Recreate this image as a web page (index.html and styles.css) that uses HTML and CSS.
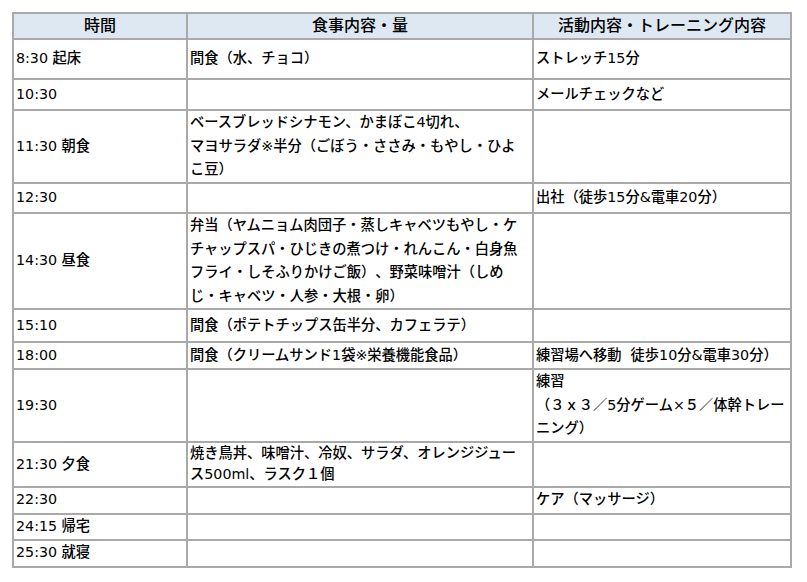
FILE: index.html
```html
<!DOCTYPE html>
<html lang="ja">
<head>
<meta charset="utf-8">
<title>スケジュール</title>
<link rel="stylesheet" href="styles.css">
</head>
<body>
<table class="schedule">
  <colgroup>
    <col class="c-time">
    <col class="c-meal">
    <col class="c-act">
  </colgroup>
  <thead>
    <tr class="h26"><th>時間</th><th>食事内容・量</th><th>活動内容・トレーニング内容</th></tr>
  </thead>
  <tbody>
    <tr class="h40"><td>8:30 起床</td><td>間食（水、チョコ）</td><td>ストレッチ15分</td></tr>
    <tr class="h31"><td>10:30</td><td></td><td>メールチェックなど</td></tr>
    <tr class="h73"><td>11:30 朝食</td><td>ベースブレッドシナモン、かまぼこ4切れ、<br>マヨサラダ※半分（ごぼう・ささみ・もやし・ひよ<br>こ豆）</td><td></td></tr>
    <tr class="h30"><td>12:30</td><td></td><td>出社（徒歩15分&amp;電車20分）</td></tr>
    <tr class="h96"><td>14:30 昼食</td><td>弁当（ヤムニョム肉団子・蒸しキャベツもやし・ケ<br>チャップスパ・ひじきの煮つけ・れんこん・白身魚<br>フライ・しそふりかけご飯）、野菜味噌汁（しめ<br>じ・キャベツ・人参・大根・卵）</td><td></td></tr>
    <tr class="h33"><td>15:10</td><td>間食（ポテトチップス缶半分、カフェラテ）</td><td></td></tr>
    <tr class="h27"><td>18:00</td><td>間食（クリームサンド1袋※栄養機能食品）</td><td>練習場へ移動&nbsp; 徒歩10分&amp;電車30分）</td></tr>
    <tr class="h72"><td>19:30</td><td></td><td>練習<br>（３ｘ３／5分ゲーム×５／体幹トレー<br>ニング）</td></tr>
    <tr class="h45 tight"><td>21:30 夕食</td><td>焼き鳥丼、味噌汁、冷奴、サラダ、オレンジジュー<br>ス500ml、ラスク１個</td><td></td></tr>
    <tr class="h27"><td>22:30</td><td></td><td>ケア（マッサージ）</td></tr>
    <tr class="h26"><td>24:15 帰宅</td><td></td><td></td></tr>
    <tr class="h27"><td>25:30 就寝</td><td></td><td></td></tr>
  </tbody>
</table>
</body>
</html>
```
FILE: styles.css
```css
html, body {
  margin: 0;
  padding: 0;
  background: #ffffff;
}

body {
  padding: 12px 0 0 12px;
  font-family: "DejaVu Sans", "Noto Sans CJK JP", sans-serif;
  font-size: 14.25px;
  font-weight: 500;
  color: #000000;
  text-spacing-trim: space-all;
}

.schedule {
  border-collapse: collapse;
  table-layout: fixed;
  width: 780px;
  border: 2px solid #a6a6a6;
}

.c-time { width: 174px; }
.c-meal { width: 346px; }
.c-act { width: 258px; }

.schedule th,
.schedule td {
  border: 2px solid #a9a9a9;
  padding: 0 0 0 2px;
  line-height: 23.5px;
  vertical-align: middle;
  text-align: left;
  white-space: nowrap;
  overflow: hidden;
  text-spacing-trim: space-all;
  box-sizing: border-box;
}

.schedule th {
  background: #dde8f2;
  font-weight: 500;
  font-size: 16px;
  text-align: center;
  padding: 0;
}

.schedule .tight td {
  line-height: 21px;
}

.h26 > * { height: 26px; }
.h27 > * { height: 27px; }
.h30 > * { height: 30px; }
.h31 > * { height: 31px; }
.h33 > * { height: 33px; }
.h40 > * { height: 40px; }
.h45 > * { height: 45px; }
.h72 > * { height: 72px; }
.h73 > * { height: 73px; }
.h96 > * { height: 96px; }
```
